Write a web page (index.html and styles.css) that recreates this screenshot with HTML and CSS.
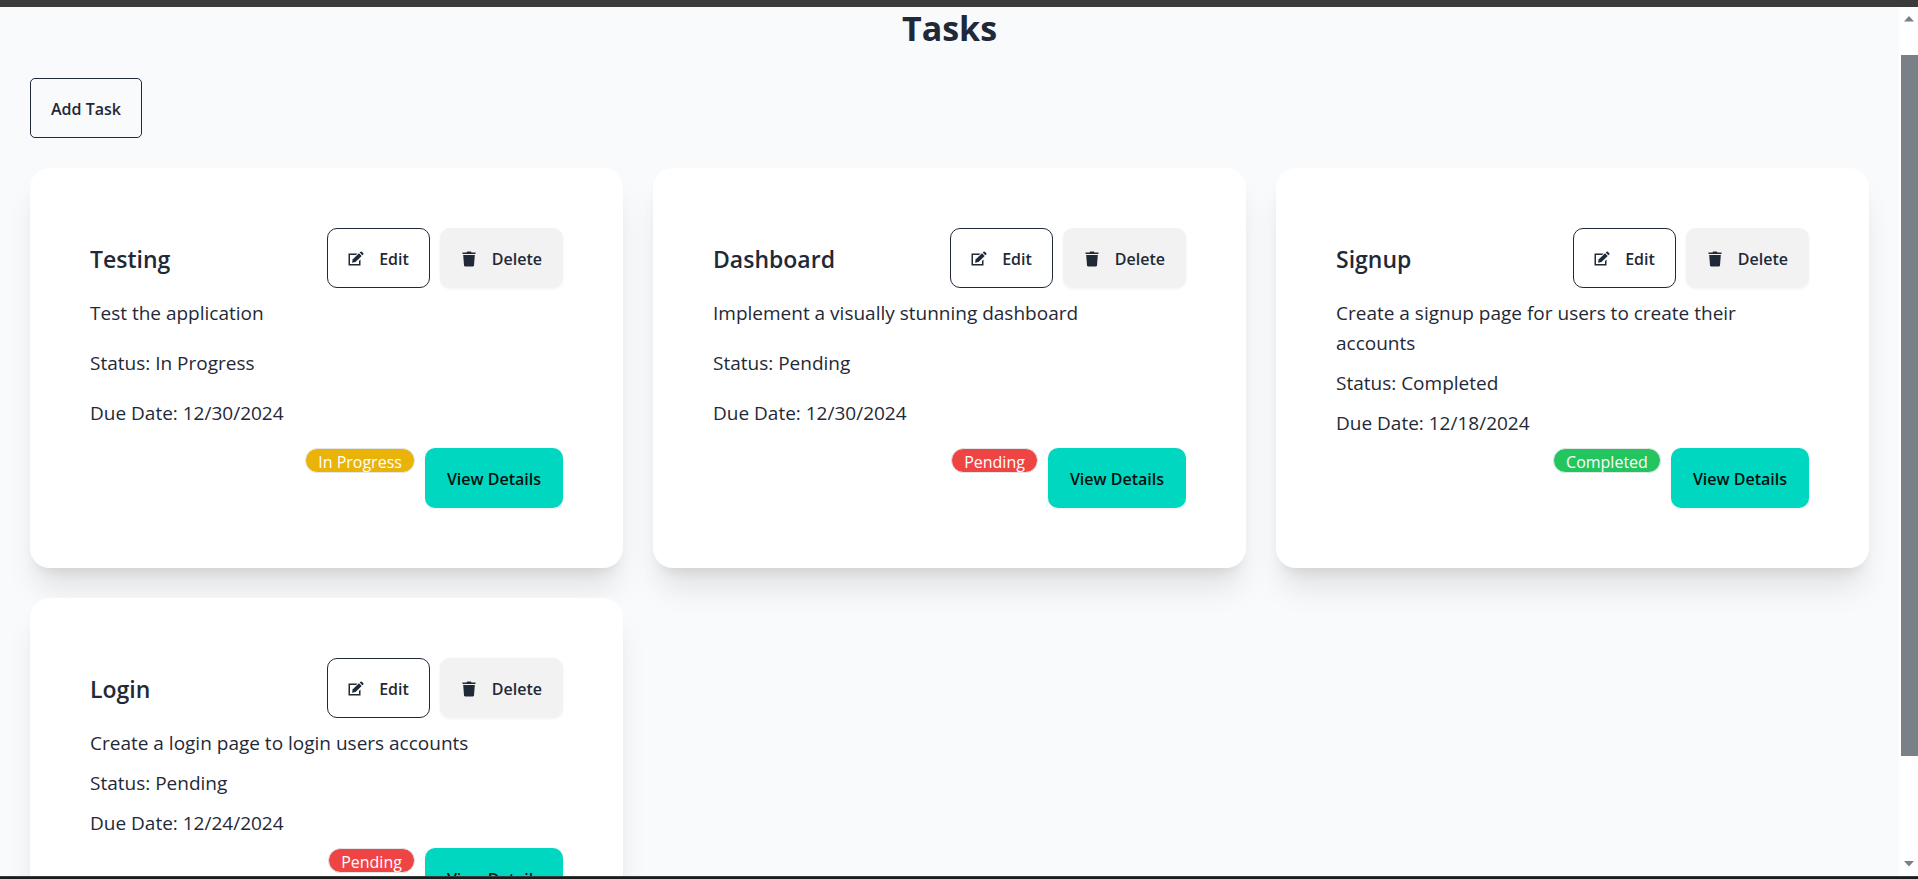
FILE: index.html
```html
<!DOCTYPE html>
<html lang="en">
<head>
<meta charset="utf-8">
<title>Tasks</title>
<link rel="stylesheet" href="styles.css">
</head>
<body>
<svg class="sprite" aria-hidden="true">
  <symbol id="icon-edit" viewBox="0 0 16 16">
    <path d="M9.500 2.500H.500v12h12V8.500L11 10v3H2V4h6z"/>
    <path d="M4 11.800l.8-3.600 6.200-5.900 2.700 2.700L7.500 11z"/>
    <path d="M11.700 1.600l.9-.9q.6-.5 1.200 0l1.500 1.500q.5.600 0 1.200l-.9.900z"/>
  </symbol>
  <symbol id="icon-trash" viewBox="0 0 16 16">
    <path d="M1.500 1.500h4L6.200.5h3.600l.7 1h4V3h-13z"/>
    <path d="M2.200 4h11.600L13 14.200q-.2 1.300-1.500 1.300h-7Q3.200 15.500 3 14.200z"/>
  </symbol>
</svg>
<div class="window">
  <div class="edge-top"></div>
  <div class="viewport">
    <main class="page">
      <h1 class="page-title">Tasks</h1>
      <button class="btn btn-outline btn-add" type="button">Add Task</button>
      <div class="cards">
        <article class="card">
          <header class="card-head">
            <h2 class="card-title">Testing</h2>
            <div class="tools">
              <button class="btn btn-outline" type="button"><svg class="icon"><use href="#icon-edit"/></svg>Edit</button>
              <button class="btn btn-muted" type="button"><svg class="icon"><use href="#icon-trash"/></svg>Delete</button>
            </div>
          </header>
          <p class="line">Test the application</p>
          <p class="line">Status: In Progress</p>
          <p class="line">Due Date: 12/30/2024</p>
          <footer class="actions">
            <span class="badge badge-progress">In Progress</span>
            <button class="btn btn-accent" type="button">View Details</button>
          </footer>
        </article>
        <article class="card">
          <header class="card-head">
            <h2 class="card-title">Dashboard</h2>
            <div class="tools">
              <button class="btn btn-outline" type="button"><svg class="icon"><use href="#icon-edit"/></svg>Edit</button>
              <button class="btn btn-muted" type="button"><svg class="icon"><use href="#icon-trash"/></svg>Delete</button>
            </div>
          </header>
          <p class="line">Implement a visually stunning dashboard</p>
          <p class="line">Status: Pending</p>
          <p class="line">Due Date: 12/30/2024</p>
          <footer class="actions">
            <span class="badge badge-pending">Pending</span>
            <button class="btn btn-accent" type="button">View Details</button>
          </footer>
        </article>
        <article class="card">
          <header class="card-head">
            <h2 class="card-title">Signup</h2>
            <div class="tools">
              <button class="btn btn-outline" type="button"><svg class="icon"><use href="#icon-edit"/></svg>Edit</button>
              <button class="btn btn-muted" type="button"><svg class="icon"><use href="#icon-trash"/></svg>Delete</button>
            </div>
          </header>
          <p class="line">Create a signup page for users to create their accounts</p>
          <p class="line">Status: Completed</p>
          <p class="line">Due Date: 12/18/2024</p>
          <footer class="actions">
            <span class="badge badge-done">Completed</span>
            <button class="btn btn-accent" type="button">View Details</button>
          </footer>
        </article>
        <article class="card">
          <header class="card-head">
            <h2 class="card-title">Login</h2>
            <div class="tools">
              <button class="btn btn-outline" type="button"><svg class="icon"><use href="#icon-edit"/></svg>Edit</button>
              <button class="btn btn-muted" type="button"><svg class="icon"><use href="#icon-trash"/></svg>Delete</button>
            </div>
          </header>
          <p class="line">Create a login page to login users accounts</p>
          <p class="line">Status: Pending</p>
          <p class="line">Due Date: 12/24/2024</p>
          <footer class="actions">
            <span class="badge badge-pending">Pending</span>
            <button class="btn btn-accent" type="button">View Details</button>
          </footer>
        </article>
      </div>
    </main>
    <div class="scrollbar" aria-hidden="true">
      <svg class="arrow" viewBox="0 0 10 6"><path d="M5 0l5 5.500H0z"/></svg>
      <div class="track"><div class="thumb"></div></div>
      <svg class="arrow" viewBox="0 0 10 6"><path d="M0 0h10L5 5.500z"/></svg>
    </div>
  </div>
  <div class="edge-bottom"></div>
</div>
</body>
</html>
```

FILE: styles.css
```css
* {
  box-sizing: border-box;
  margin: 0;
}

body {
  background: #f9fafb;
  color: #1f2937;
  font-family: "Open Sans", "Noto Sans", sans-serif;
  font-size: 19px;
  line-height: 30px;
}

.sprite {
  display: none;
}

.window {
  display: flex;
  flex-direction: column;
  height: 100vh;
}

.edge-top {
  flex: none;
  height: 7px;
  background: #3b3b3b;
}

.edge-bottom {
  flex: none;
  height: 3px;
  background: #1c1c1e;
  border-top: 1px solid #3b3b3b;
}

.viewport {
  flex: 1;
  min-height: 0;
  display: flex;
  overflow: hidden;
}

.page {
  flex: 1;
  min-width: 0;
  padding: 0 30px 30px;
  background: #f9fafc;
}

.page-title {
  margin-bottom: 29px;
  font-size: 34px;
  font-weight: 700;
  line-height: 42px;
  text-align: center;
}

.cards {
  display: grid;
  grid-template-columns: repeat(3, minmax(0, 1fr));
  gap: 30px;
}

.card {
  display: flex;
  flex-direction: column;
  gap: 10px;
  padding: 60px;
  border-radius: 20px;
  background: #fff;
  box-shadow: 0 25px 31px -6px rgba(0, 0, 0, 0.1), 0 10px 13px -8px rgba(0, 0, 0, 0.1);
}

.card-head {
  display: flex;
  align-items: center;
  justify-content: space-between;
}

.card-title {
  padding-top: 3px;
  font-size: 23px;
  font-weight: 600;
  line-height: 35px;
}

.tools {
  display: flex;
  gap: 10px;
}

.line {
  flex: 1 0 auto;
}

.actions {
  display: flex;
  align-items: flex-start;
  justify-content: flex-end;
  gap: 10px;
}

.btn {
  display: inline-flex;
  align-items: center;
  justify-content: center;
  gap: 15px;
  height: 60px;
  padding: 2px 20px 0;
  border: 1px solid transparent;
  border-radius: 10px;
  font: 600 16px/20px "Open Sans", "Noto Sans", sans-serif;
  color: #1f2937;
  white-space: nowrap;
}

.btn-outline {
  background: transparent;
  border-color: #1f2937;
}

.btn-add {
  margin-bottom: 30px;
  border-radius: 5px;
}

.btn-muted {
  background: #f2f2f2;
  box-shadow: 0 1px 3px rgba(0, 0, 0, 0.06);
}

.btn-accent {
  padding: 2px 21px 0;
  background: #00d7c0;
  color: #00110e;
  box-shadow: 0 1px 3px rgba(0, 0, 0, 0.06);
}

.icon {
  width: 16px;
  height: 16px;
  fill: currentColor;
}

.badge {
  height: 25px;
  padding: 0 12px;
  border: 1px solid #e5e6e8;
  border-radius: 13px;
  color: #fff;
  font-size: 16px;
  line-height: 26px;
}

.badge-progress {
  background: #eab308;
}

.badge-pending {
  background: #ef4444;
}

.badge-done {
  background: #22c55e;
}

.scrollbar {
  flex: none;
  display: flex;
  flex-direction: column;
  align-items: center;
  width: 19px;
  padding: 9px 0;
  background: #fff;
}

.arrow {
  width: 10px;
  height: 6px;
  fill: #7a8087;
}

.track {
  flex: 1;
  align-self: stretch;
  padding: 33px 0 0 2px;
}

.thumb {
  height: 87%;
  background: #7a8087;
}
```
